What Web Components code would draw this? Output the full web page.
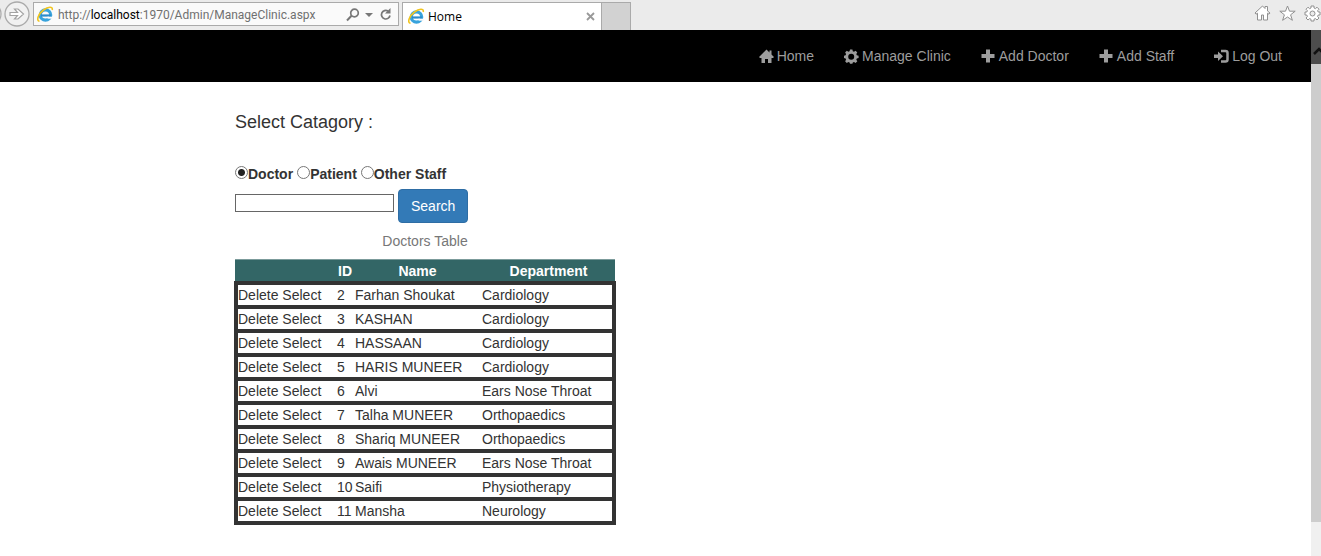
<!DOCTYPE html>
<html lang="en">
<head>
<meta charset="utf-8">
<title>Home</title>
<style>
html,body{margin:0;height:100%}
body{background:#fff;color:#333;font:14px/20px "Liberation Sans",Arial,sans-serif;overflow:hidden}
</style>
</head>
<body>
<clinic-app></clinic-app>
<script>
const ICONS = {
  home: '<path fill="currentColor" d="M7.500 .500 0 8l1 1h1.500v5H6v-4h3v4h3.500V9H14l1-1-2.500-2.500V1.500h-2v2z"/>',
  cog: '<path fill="currentColor" fill-rule="evenodd" d="M6 .500h2.400l.4 1.800 1.200.5 1.600-1 1.700 1.700-1 1.600.5 1.200 1.800.4v2.400l-1.800.4-.5 1.200 1 1.600-1.700 1.700-1.600-1-1.200.5-.4 1.300H6l-.4-1.300-1.200-.5-1.600 1-1.700-1.700 1-1.600-.5-1.200L0 9.100V6.700l1.600-.4.5-1.200-1-1.600 1.700-1.700 1.600 1 1.200-.5zM7.200 4.700a3 3 0 1 0 0 6 3 3 0 0 0 0-6z"/>',
  plus: '<path fill="currentColor" d="M5 .500h4V5h4.500v4H9v4.500H5V9H.500V5H5z"/>',
  logout: '<path fill="currentColor" d="M0 5.500h4V2.500L9 7.300 4 12V9H0z"/><path fill="none" stroke="currentColor" stroke-width="2.500" d="M7 2h4.500q2 0 2 2v6.500q0 2-2 2H7"/>',
  ie: '<circle cx="8.500" cy="9" r="5.200" fill="none" stroke="#38a3dc" stroke-width="3.200"/><path d="M4 9.500h10" stroke="#2b8bcb" stroke-width="2.200"/><path d="M10.500 10.700H16v2h-5.500z" fill="#fafafa"/><path d="M2.500 15.300C-1 15 1 8 6.500 4 11 .500 16 0 15.200 4" fill="none" stroke="#f0c420" stroke-width="1.600"/>',
  back: '<circle cx="-11" cy="13" r="12" fill="#f1f1f1" stroke="#aaa" stroke-width="1.300"/>',
  forward: '<circle cx="13" cy="13" r="12" fill="#f1f1f1" stroke="#aaa" stroke-width="1.300"/><path d="M6 11.500h7.500l-3-3.500h3.500l5.500 5-5.500 5h-3.500l3-3.500H6z" fill="#fff" stroke="#a3a3a3" stroke-width="1.200"/>',
  search: '<circle cx="8.500" cy="5" r="3.800" fill="none" stroke="#777" stroke-width="1.700"/><path d="M5.500 7.800 1 12.500" stroke="#777" stroke-width="2"/>',
  caret: '<path d="M0 0h8L4 4z" fill="#777"/>',
  refresh: '<path d="M10 7.500A4.300 4.300 0 1 1 8 3" fill="none" stroke="#777" stroke-width="1.700"/><path d="M10.500 0v5.500H5z" fill="#777"/>',
  close: '<path d="m1 1 7 7M8 1 1 8" stroke="#999" stroke-width="1.800"/>',
  house: '<path d="M1 8 8.500 1 11 3.500V1.500h2.500V6L16 8l-1 1.200-1.500-1V15h-4v-5h-2v5h-4V8.200L2 9.200z" fill="#fff" stroke="#909090"/>',
  star: '<path d="m8.500 1 2 5.200h5.700l-4.600 3.600 1.800 5.500-4.900-3.300-4.900 3.300 1.800-5.500L.8 6.200h5.700z" fill="#fff" stroke="#909090"/>',
  gear: '<path fill-rule="evenodd" d="M7 1h3v2l1.500.6L13 2.200 15 4.200l-1.400 1.500L14.200 7H16v3h-1.800l-.6 1.500L15 13l-2 2-1.500-1.400-1.500.6V16H7v-1.800l-1.500-.6L4 15l-2-2 1.400-1.500L2.800 10H1V7h1.800l.6-1.300L2 4.200 4 2.200l1.500 1.400L7 3zM8.500 6a2.500 2.500 0 1 0 0 5 2.500 2.500 0 0 0 0-5z" fill="#fff" stroke="#909090"/>'
};
const icon = (name, w, h) => `<svg width="${w}" height="${h}" viewBox="0 0 ${w} ${h}" aria-hidden="true">${ICONS[name]}</svg>`;
const define = (name, html) => customElements.define(name, class extends HTMLElement {
  constructor() {
    super();
    this.attachShadow({mode: 'open'}).innerHTML = typeof html === 'function' ? html(this) : html;
  }
});

define('browser-bar', `
<style>
:host{display:flex;height:30px;box-sizing:border-box;background:#ebebeb;font:12px/16px "Open Sans",sans-serif;color:#000;overflow:hidden}
*{box-sizing:border-box}
svg{display:block;flex:none}
button{border:0;padding:0;background:none;display:block}
.back{width:2px;height:26px;margin-top:1px;flex:none}
.forward{width:26px;height:26px;margin:1px 3px 0 2px;flex:none}
.address{display:flex;align-items:center;width:366px;height:24px;margin-top:2px;padding:1px 6px 0 3px;border:1px solid #aaa;background:#fafafa;flex:none}
.url{flex:1;margin-left:4px;color:#707070;font-family:Roboto,sans-serif;white-space:nowrap}
.url b{font-weight:400;color:#000}
.address button+button{margin-left:5px}
.address button:last-child{margin-left:7px}
.tab{display:flex;align-items:center;width:200px;height:28px;margin:2px 0 0 3px;padding:0 6px 0 5px;border:1px solid #aaa;border-bottom:0;background:#fff;flex:none}
.tab span{flex:1;margin-left:3px}
.new{width:29px;height:28px;margin-top:2px;background:#d2d2d2;border:1px solid #aaa;border-left:0;border-bottom:0;flex:none}
.tools{display:flex;align-items:flex-start;gap:8px;margin:5px 0 0 auto}
</style>
<button class="back" aria-label="Back">${icon('back',2,26)}</button>
<button class="forward" aria-label="Forward">${icon('forward',26,26)}</button>
<div class="address">${icon('ie',17,17)}<span class="url">http://<b>localhost</b>:1970/Admin/ManageClinic.aspx</span>
<button aria-label="Search">${icon('search',14,14)}</button><button aria-label="Show addresses">${icon('caret',8,4)}</button><button aria-label="Refresh">${icon('refresh',12,13)}</button></div>
<div class="tab">${icon('ie',17,17)}<span>Home</span><button aria-label="Close tab">${icon('close',9,9)}</button></div>
<button class="new" aria-label="New tab"></button>
<div class="tools"><button aria-label="Home page">${icon('house',17,17)}</button><button aria-label="Favorites">${icon('star',17,17)}</button><button aria-label="Tools">${icon('gear',17,17)}</button></div>`);

define('nav-link', el => `
<style>:host{display:block}
a{display:flex;align-items:center;gap:3px;padding:16px 15px;color:#9d9d9d;text-decoration:none;line-height:20px;white-space:nowrap}
svg{flex:none}</style>
<a href="#">${icon(el.getAttribute('icon'),15,15)}<slot></slot></a>`);

define('site-nav', `
<style>:host{display:flex;justify-content:flex-end;background:#000;height:52px;padding-right:14px}
.end{margin-left:10px}</style>
<nav-link icon="home">Home</nav-link><nav-link icon="cog">Manage Clinic</nav-link><nav-link icon="plus">Add Doctor</nav-link><nav-link icon="plus">Add Staff</nav-link><nav-link class="end" icon="logout">Log Out</nav-link>`);

define('search-form', `
<style>
:host{display:block}
h4{margin:0;font-size:18px;line-height:20px;font-weight:400}
.choices{display:flex;gap:4px;margin-top:32px;font-weight:700}
label{display:flex;align-items:center}
input[type=radio]{appearance:none;box-sizing:border-box;width:13px;height:13px;margin:0 0 3px;border:1px solid #777;border-radius:50%;background:#fff}
input[type=radio]:checked{background:radial-gradient(circle,#222 3px,#fff 4px)}
.row{display:flex;gap:4px;margin-top:5px}
input[type=text]{box-sizing:border-box;width:159px;height:18px;margin:5px 0 0;padding:0 2px;border:1px solid #666;background:#fff}
.row button{height:34px;padding:0 12px;border:1px solid #2e6da4;border-radius:4px;background:#337ab7;color:#fff;font:inherit}
</style>
<h4>Select Catagory :</h4>
<div class="choices"><label><input type="radio" name="category" checked>Doctor</label><label><input type="radio" name="category">Patient</label><label><input type="radio" name="category">Other Staff</label></div>
<div class="row"><input type="text" aria-label="Search text"><button type="button">Search</button></div>`);

const DOCTORS = [
  [2,'Farhan Shoukat','Cardiology'],[3,'KASHAN','Cardiology'],[4,'HASSAAN','Cardiology'],[5,'HARIS MUNEER','Cardiology'],[6,'Alvi','Ears Nose Throat'],
  [7,'Talha MUNEER','Orthopaedics'],[8,'Shariq MUNEER','Orthopaedics'],[9,'Awais MUNEER','Ears Nose Throat'],[10,'Saifi','Physiotherapy'],[11,'Mansha','Neurology']];
define('doctors-table', `
<style>
:host{display:block}
table{width:382px;margin-left:-1px;table-layout:fixed;border-collapse:separate;border-spacing:0}
caption{padding:8px 0;color:#777;line-height:20px}
th,td{box-sizing:border-box;padding:0 1px;white-space:nowrap}
th{height:26px;padding-top:1px;border-bottom:4px solid #333;background:#366;box-shadow:inset 0 1px #7b9b9b;color:#fff;line-height:20px}
th:first-child{box-shadow:inset 1px 0 #fff,inset 0 1px #7b9b9b}
th:last-child{box-shadow:inset -1px 0 #fff,inset 0 1px #7b9b9b}
td{height:24px;border-bottom:4px solid #333;line-height:20px}
td:first-child{border-left:4px solid #333;padding-left:0}
td:last-child{border-right:4px solid #333}
a{color:#333;text-decoration:none}
.actions{width:102px}.id{width:18px}.name{width:127px}
</style>
<table><caption>Doctors Table</caption>
<colgroup><col class="actions"><col class="id"><col class="name"><col></colgroup>
<thead><tr><th></th><th>ID</th><th>Name</th><th>Department</th></tr></thead>
<tbody>${DOCTORS.map(([id,n,d]) => `<tr><td><a href="#">Delete</a> <a href="#">Select</a></td><td>${id}</td><td>${n}</td><td>${d}</td></tr>`).join('')}</tbody></table>`);

define('scroll-rail', `
<style>
:host{display:flex;flex-direction:column;width:10px;background:#f0f0f0;overflow:hidden}
.up{height:34px;background:#4d4d4d;flex:none}
.up svg{display:block;margin:17px 0 0 2px}
.thumb{flex:0 0 87%;background:#cdcdcd}
</style>
<div class="up"><svg width="10" height="8" viewBox="0 0 10 8"><path d="m1 7 5-5 5 5" fill="none" stroke="#111" stroke-width="2.500"/></svg></div><div class="thumb"></div>`);

define('clinic-app', `
<style>
:host{display:flex;flex-direction:column;height:100vh}
browser-bar{flex:none}
.view{display:flex;flex:1;min-height:0}
.page{flex:1;min-width:0;overflow:hidden}
main{padding:30px 16px 30px 235px}
</style>
<browser-bar></browser-bar>
<div class="view"><div class="page"><site-nav></site-nav><main><search-form></search-form><doctors-table></doctors-table></main></div><scroll-rail></scroll-rail></div>`);
</script>
</body>
</html>
